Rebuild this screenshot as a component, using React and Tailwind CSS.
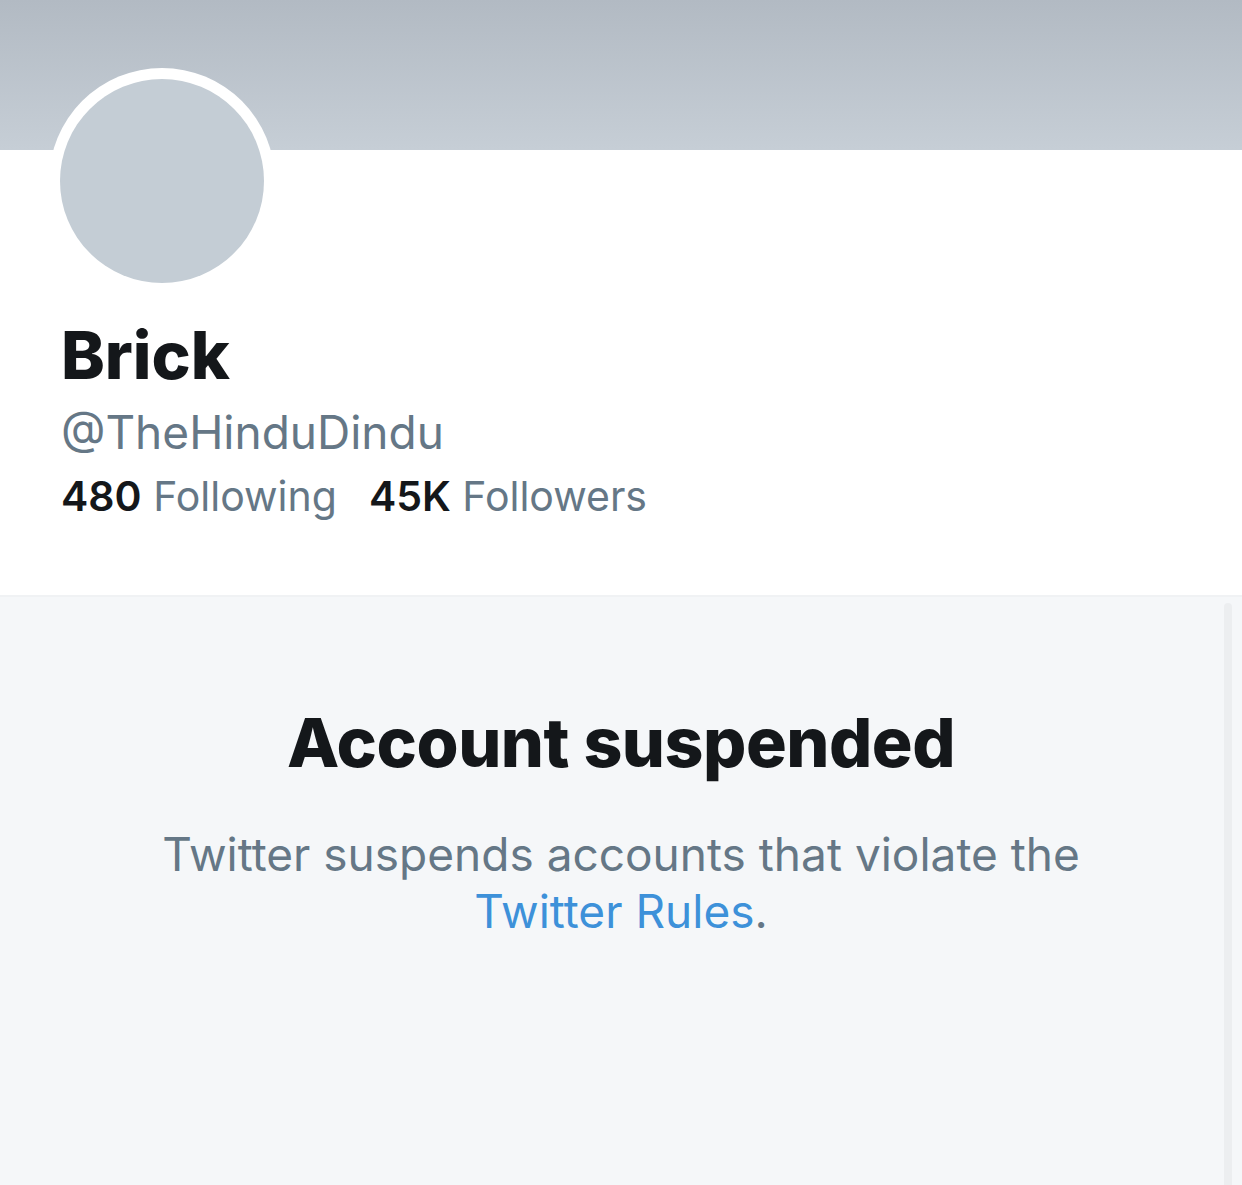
export default function App() {
  return (
    <div
      className="relative w-[1242px] h-[1185px] overflow-hidden bg-white"
      style={{ fontFamily: "Inter, 'Noto Sans', sans-serif" }}
    >
      {/* Banner */}
      <div className="h-[150px] bg-gradient-to-b from-[#b2bac3] to-[#c6ced6]" />

      {/* Profile header */}
      <div className="px-[49px]">
        <div className="-mt-[82px] w-[226px] h-[226px] rounded-full bg-white p-[11px]">
          <div className="w-full h-full rounded-full bg-[#c4cdd5]" />
        </div>
      </div>
      <div className="pl-[61px] pt-[28px] pb-[78px]">
        <h1 className="text-[66px] leading-none font-extrabold text-[#14171a]">
          Brick
        </h1>
        <div className="mt-[21px] text-[46px] leading-none text-[#657786]">
          @TheHinduDindu
        </div>
        <div className="mt-[21px] flex gap-[32px] text-[41px] leading-none">
          <span>
            <span className="font-semibold text-[#14171a]">480</span>{" "}
            <span className="text-[#657786]">Following</span>
          </span>
          <span>
            <span className="font-semibold text-[#14171a]">45K</span>{" "}
            <span className="text-[#657786]">Followers</span>
          </span>
        </div>
      </div>

      {/* Suspended notice */}
      <div className="relative h-full border-t-2 border-[#f0f2f4] bg-[#f5f7f9]">
        <div className="pt-[111px] flex flex-col items-center text-center">
          <h2 className="text-[68px] leading-none font-extrabold text-[#14171a] tracking-[-0.5px]">
            Account suspended
          </h2>
          <p className="mt-[50px] max-w-[940px] text-[46px] leading-[57px] text-[#657786]">
            Twitter suspends accounts that violate the{" "}
            <span className="text-[#3d91d9]">Twitter Rules</span>.
          </p>
        </div>
        {/* scrollbar */}
        <div className="absolute top-[6px] right-[10px] w-[8px] h-full rounded-full bg-[#eceef0]" />
      </div>
    </div>
  );
}
